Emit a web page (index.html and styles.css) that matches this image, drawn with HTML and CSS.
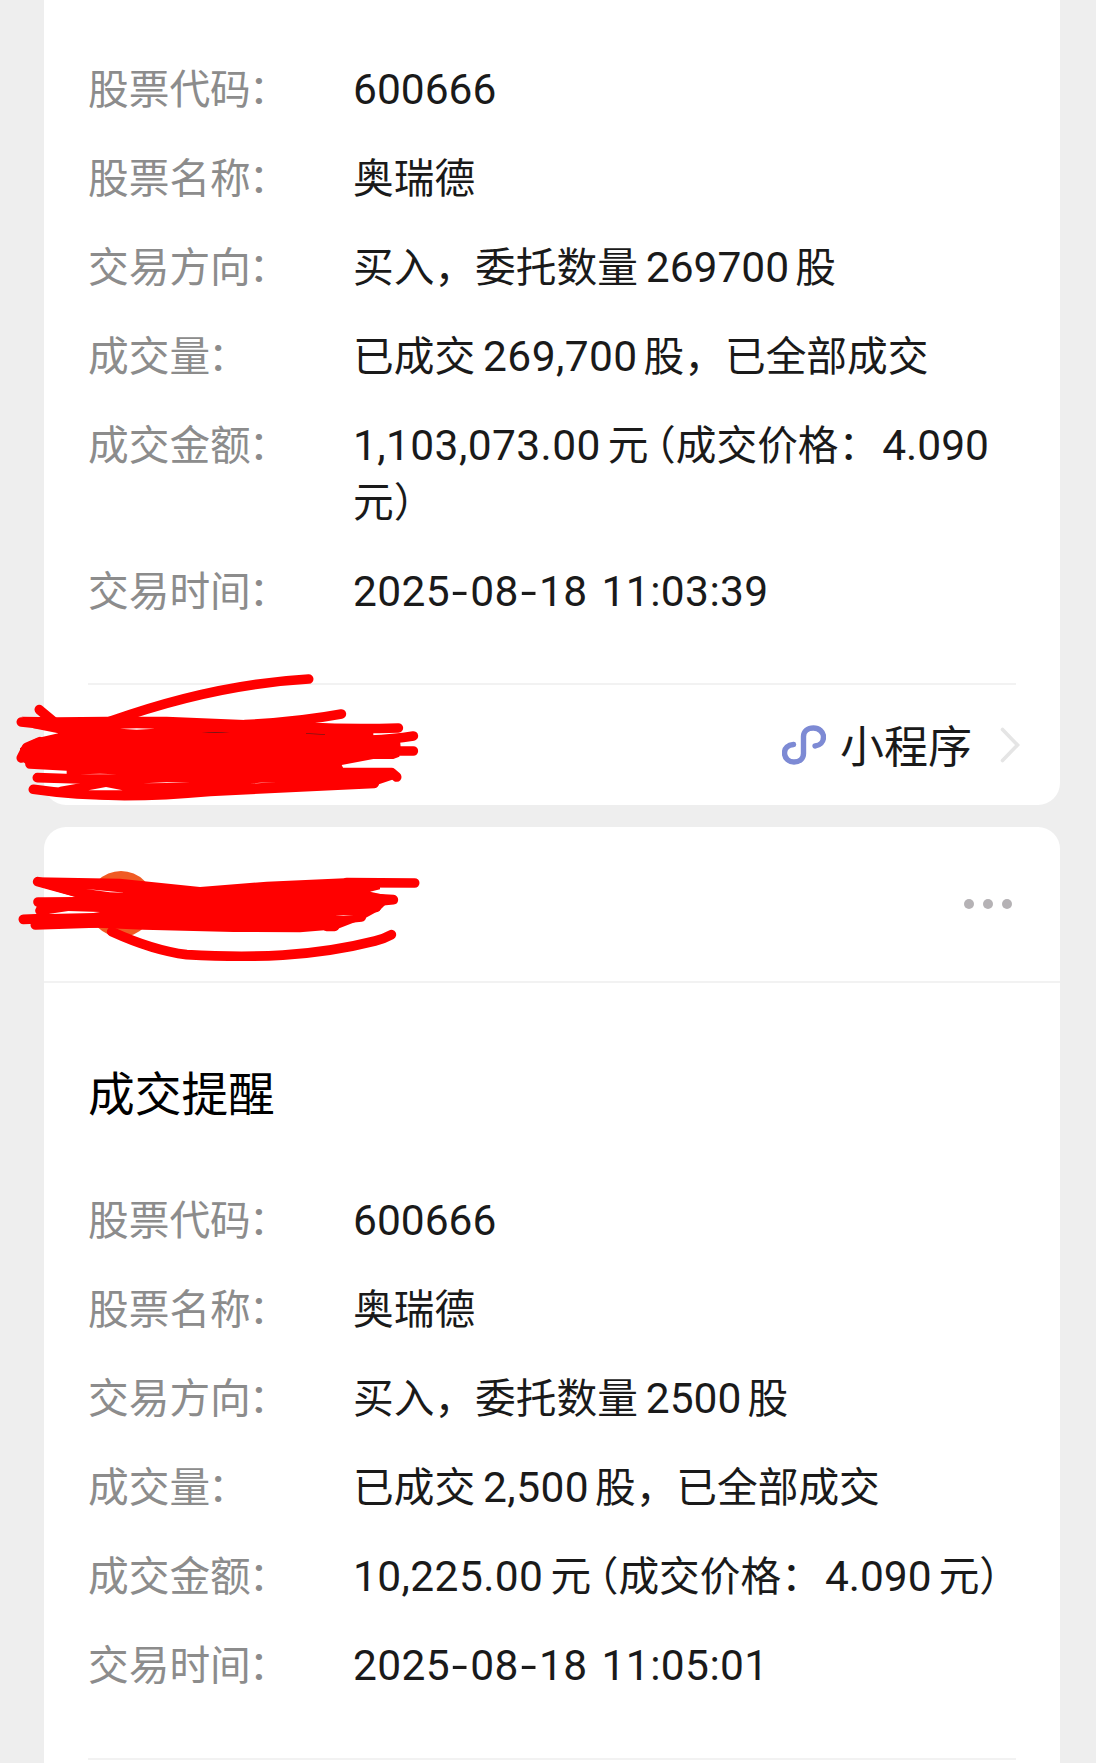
FILE: index.html
```html
<!DOCTYPE html>
<html lang="zh-CN">
<head>
  <meta charset="UTF-8">
  <meta name="viewport" content="width=device-width, initial-scale=1.0">
  <title>成交提醒</title>
  <link rel="stylesheet" href="styles.css">
</head>
<body>
  <div class="card card-first">
    <div class="detail-list">
      <div class="row">
        <div class="label">股票代码<span class="colon">&#65306;</span></div>
        <div class="value"><span class="num">600666</span></div>
      </div>
      <div class="row">
        <div class="label">股票名称<span class="colon">&#65306;</span></div>
        <div class="value">奥瑞德</div>
      </div>
      <div class="row">
        <div class="label">交易方向<span class="colon">&#65306;</span></div>
        <div class="value">买入&#65292;委托数量<span class="num mid">269700</span>股</div>
      </div>
      <div class="row">
        <div class="label">成交量<span class="colon">&#65306;</span></div>
        <div class="value">已成交<span class="num mid amount">269,700</span>股&#65292;已全部成交</div>
      </div>
      <div class="row">
        <div class="label">成交金额<span class="colon">&#65306;</span></div>
        <div class="value"><span class="num lead amount">1,103,073.00</span>元<span class="paren">&#65288;</span>成交价格&#65306;<span class="num price">4.090</span><br>元<span class="paren-end">&#65289;</span></div>
      </div>
      <div class="row">
        <div class="label">交易时间<span class="colon">&#65306;</span></div>
        <div class="value"><span class="num time">2025<span class="dash">-</span>08<span class="dash">-</span>18 11:03:39</span></div>
      </div>
    </div>

    <div class="card-footer">
      <svg class="mini-icon" viewBox="0 0 44 40">
        <path d="M11.500 19.500C6 20 2.500 23 2.500 28C2.500 33 6.500 37 12 37C17.500 37 21.500 33.500 21.500 28.500V11.500C21.500 6.500 25.500 3 31.500 3C37 3 41.500 7 41.500 12C41.500 17 38 20.500 33 21" />
      </svg>
      <span class="mini-text">小程序</span>
      <svg class="arrow" viewBox="0 0 20 36">
        <path d="M2.500 2.500L17.500 18L2.500 33.500" />
      </svg>
    </div>

    <svg class="scribble scribble-bottom" viewBox="0 0 1320 480">
      <path class="fill" d="M65 170L170 172L320 170L500 170L735 180L945 190L1120 205V232L1200 240L1202 262L1198 290L1180 297H1120L1025 315L1030 325L1175 330L1190 355L1130 375L750 398L450 415L340 420L250 415L150 400L180 380L240 370L200 345V330L90 320L60 300L60 265L80 250L110 235L175 220L100 205Z" />
      <path d="M118 149L165 188M64 186L120 192L190 203M330 184Q640 73 926 57M735 194Q900 185 1024 162M930 202Q1050 208 1195 204M1110 240Q1180 238 1240 228M1100 273H1240M90 312L200 318M112 353L240 357M1020 338L1175 338L1190 351M100 388Q330 422 630 394L1123 370M64 294L80 262L120 245" />
      <path class="gap" d="M360 206L410 209L465 206L410 205ZM265 391L318 381L368 391ZM430 370L570 368L500 367ZM240 343L350 343L300 341ZM750 371L780 368L830 366Z" />
      <path class="trace" d="M605 219Q645 213 690 219ZM918 219L975 223L975 225L918 221Z" />
    </svg>
  </div>

  <div class="card card-second">
    <div class="card-header">
      <div class="avatar"></div>
      <div class="more"><i></i><i></i><i></i></div>
    </div>

    <h2 class="card-title">成交提醒</h2>

    <div class="detail-list">
      <div class="row">
        <div class="label">股票代码<span class="colon">&#65306;</span></div>
        <div class="value"><span class="num">600666</span></div>
      </div>
      <div class="row">
        <div class="label">股票名称<span class="colon">&#65306;</span></div>
        <div class="value">奥瑞德</div>
      </div>
      <div class="row">
        <div class="label">交易方向<span class="colon">&#65306;</span></div>
        <div class="value">买入&#65292;委托数量<span class="num mid">2500</span>股</div>
      </div>
      <div class="row">
        <div class="label">成交量<span class="colon">&#65306;</span></div>
        <div class="value">已成交<span class="num mid amount">2,500</span>股&#65292;已全部成交</div>
      </div>
      <div class="row">
        <div class="label">成交金额<span class="colon">&#65306;</span></div>
        <div class="value"><span class="num lead amount">10,225.00</span>元<span class="paren">&#65288;</span>成交价格&#65306;<span class="num price lead">4.090</span>元<span class="paren-end">&#65289;</span></div>
      </div>
      <div class="row">
        <div class="label">交易时间<span class="colon">&#65306;</span></div>
        <div class="value"><span class="num time">2025<span class="dash">-</span>08<span class="dash">-</span>18 11:05:01</span></div>
      </div>
    </div>
    <div class="card-line"></div>

    <svg class="scribble scribble-top" viewBox="0 0 1320 540">
      <path class="fill" d="M110 202L360 206L600 231L800 215L1050 204L1140 208V238L1110 245L1180 260L1140 300L1095 325L1010 358L900 367L700 366L430 359L290 353L105 350L110 325L200 305L110 295L110 265L228 261L115 228Z" />
      <path d="M113 215L230 247M1040 218L1244 219M1100 264L1180 269L1110 276M1090 292H1129M114 276L250 276M120 302L200 292M70 328L200 323M106 345L290 339M1000 329L1084 321M980 349L1004 349M335 365Q460 422 560 434C760 445 940 440 1125 393Q1150 387 1174 374" />
      <path class="gap" d="M258 237L375 248L330 247ZM145 312L205 303L300 306L280 309ZM1005 317L1060 315L1030 318Z" />
    </svg>
  </div>
</body>
</html>
```

FILE: styles.css
```css
* {
  box-sizing: border-box;
}

body {
  margin: 0;
  height: 1763px;
  overflow: hidden;
  background: #eee;
  color: #1a1a1a;
  font-family: "Noto Sans CJK SC", sans-serif;
  font-size: 40.7px;
  line-height: 57px;
}

.card {
  position: relative;
  width: 1016px;
  margin-left: 44px;
  padding: 0 44px;
  background: #fff;
  border-radius: 22px;
}

.card-first {
  height: 805px;
  padding-top: 58px;
  border-top-left-radius: 0;
  border-top-right-radius: 0;
}

.card-second {
  height: 936px;
  margin-top: 22px;
  border-bottom-left-radius: 0;
  border-bottom-right-radius: 0;
}

.detail-list {
  display: flex;
  flex-direction: column;
  gap: 32px;
}

.row {
  display: flex;
}

.label {
  width: 265px;
  flex-shrink: 0;
  color: #8c8c8c;
}

.colon {
  margin-left: -2px;
}

.value {
  flex: 1;
  white-space: nowrap;
}

.num {
  font-family: Roboto, "Noto Sans CJK SC", sans-serif;
  font-size: 42.5px;
  line-height: 1;
}

.num.mid {
  margin: 0 6px 0 8px;
}

.num.lead {
  margin-right: 7px;
}

.num.amount {
  letter-spacing: 0.4px;
}

.num.price {
  margin-left: 3px;
}

.num.time {
  letter-spacing: 0.4px;
  word-spacing: 3px;
}

.dash {
  display: inline-block;
  margin: 0 4px;
  transform: scaleX(1.35);
}

.paren {
  margin-left: 7px;
  font-feature-settings: "halt";
}

.paren-end {
  font-feature-settings: "halt";
}

.card-footer {
  display: flex;
  align-items: center;
  justify-content: flex-end;
  height: 122px;
  margin-top: 66px;
  border-top: 2px solid #f2f2f2;
}

.mini-icon {
  width: 44px;
  height: 40px;
  fill: none;
  stroke: #7d8ad4;
  stroke-width: 5.4;
  stroke-linecap: round;
}

.mini-text {
  margin: 0 28px 0 14px;
  font-size: 44px;
  line-height: 60px;
  padding-bottom: 2px;
}

.arrow {
  width: 20px;
  height: 36px;
  margin-right: -4px;
  fill: none;
  stroke: #e5e5e5;
  stroke-width: 3.6;
  stroke-linecap: round;
}

.card-header {
  display: flex;
  align-items: center;
  justify-content: space-between;
  height: 156px;
  margin: 0 -44px;
  padding: 0 48px 0 44px;
  border-bottom: 2px solid #f2f2f2;
}

.avatar {
  width: 66px;
  height: 66px;
  border-radius: 50%;
  background: #f05a23;
}

.more {
  display: flex;
  gap: 9px;
}

.more i {
  width: 10px;
  height: 10px;
  border-radius: 50%;
  background: #b5b2b5;
}

.card-title {
  margin: 79px 0 70px;
  color: #000;
  font-size: 46.7px;
  font-weight: 400;
  line-height: 57px;
}

.card-line {
  height: 2px;
  margin-top: 67px;
  background: #f2f2f2;
}

/* redaction strokes drawn over the account name */
.scribble {
  position: absolute;
  left: -44px;
  fill: none;
  stroke: #f00;
  stroke-width: 29;
  stroke-linecap: round;
  stroke-linejoin: round;
}

.scribble-bottom {
  top: 660px;
  width: 440px;
  height: 160px;
}

.scribble-top {
  top: -17px;
  width: 440px;
  height: 180px;
}

.scribble .fill {
  fill: #f00;
  stroke: none;
}

.scribble .gap {
  fill: #fff;
  stroke: none;
}

.scribble .trace {
  fill: #7a1616;
  stroke: none;
}
```
